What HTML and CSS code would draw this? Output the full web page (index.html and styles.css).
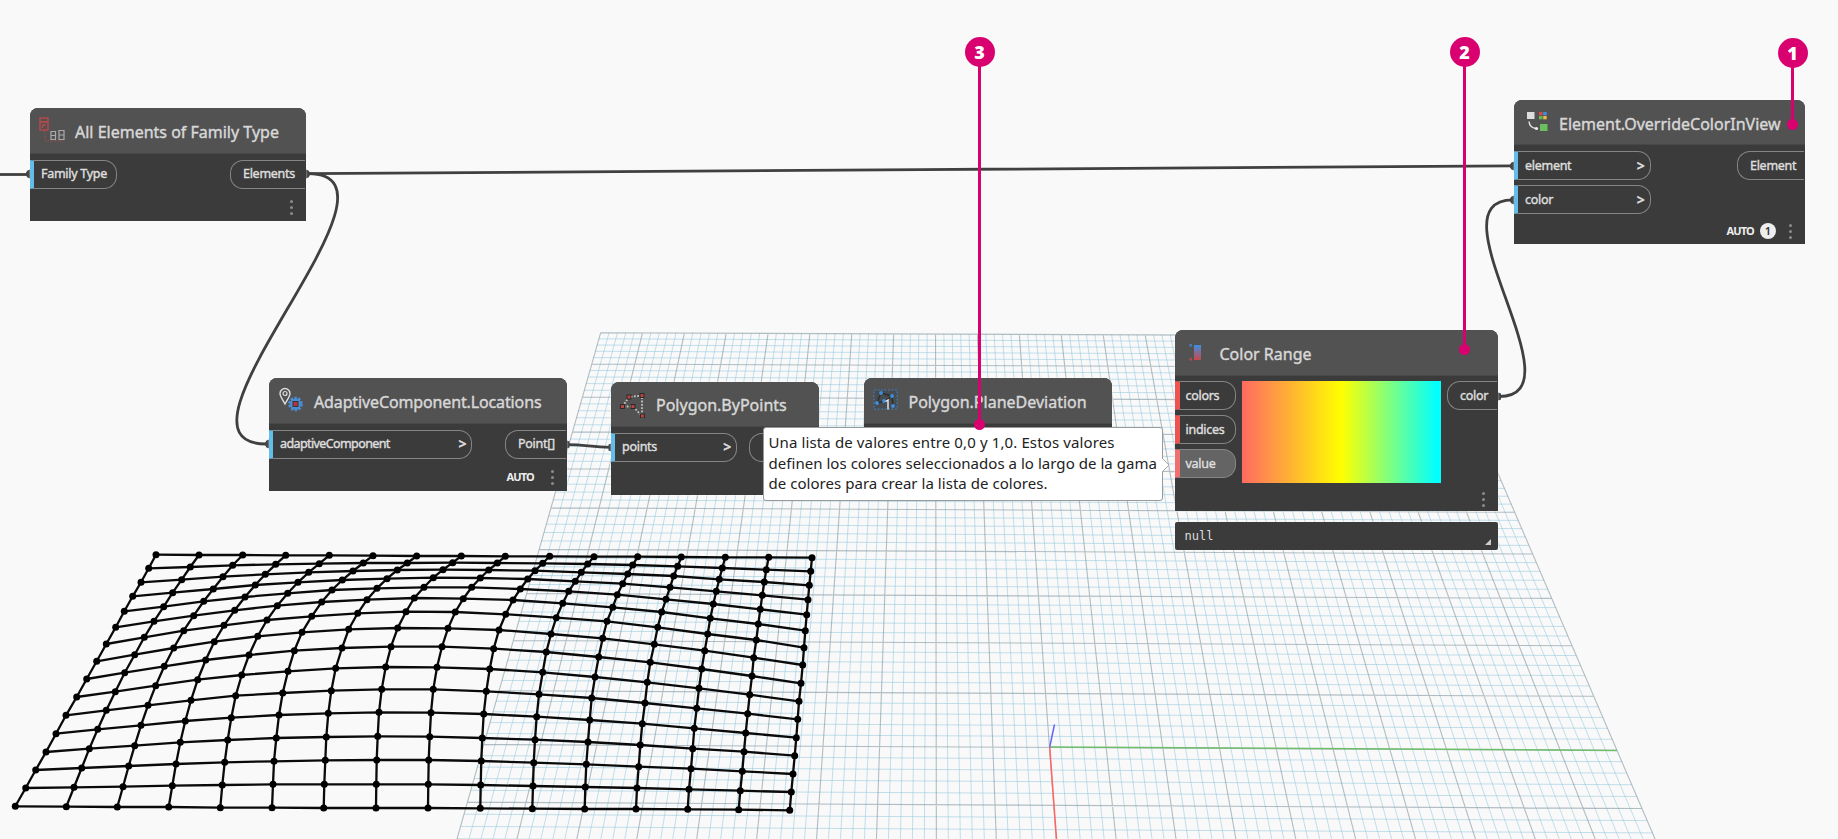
FILE: index.html
```html
<!DOCTYPE html>
<html lang="es">
<head>
<meta charset="utf-8">
<title>Dynamo</title>
<link rel="stylesheet" href="styles.css">
</head>
<body>
<main class="workspace">
  <svg class="scene" width="1838" height="839" viewBox="0 0 1838 839">
    <g id="floor"></g>
    <g class="axes">
      <path class="axis-y" d="M1049.7 747L1617 750.4"/>
      <path class="axis-x" d="M1049.7 747L1056.5 839"/>
      <path class="axis-z" d="M1049.7 747L1054.5 724.5"/>
    </g>
    <g id="mesh"></g>
    <g class="wires">
      <path d="M0 174.5H28"/>
      <path d="M308 173.7C700 173.7 1120 165.8 1513 165.8"/>
      <path d="M308 173.7C425 173.7 150 444 266 444"/>
      <path d="M568 444.6C585 444.6 592 447.3 610 447.3"/>
      <path d="M1499 396.5C1583 396.5 1428 199.8 1513 199.8"/>
    </g>
    <g class="plugs">
      <path d="M30 169.5v9l-2.500-1q-3.500-3.500 0-7z"/>
      <path d="M306 169.500v9l2.500-1q3-3.500 0-7z"/>
      <path d="M269 439.500v9l-2.500-1q-3-3.500 0-7z"/>
      <path d="M567 440.500v8l2.500-1v-6z"/>
      <path d="M611 443.500v8l-2.500-1v-6z"/>
      <path d="M1498 392.500v8l3-1v-6z"/>
      <path d="M1514 161.500v9l-2.500-1q-3.500-3.500 0-7z"/>
      <path d="M1514 195.500v9l-2.500-1q-3.500-3.500 0-7z"/>
    </g>
  </svg>

  <section class="node node-family">
    <header class="head">
      <svg class="icon" width="28" height="28" viewBox="0 0 28 28">
        <g fill="none" stroke="#c24848" stroke-width="1.300"><rect x="2" y="2" width="8" height="12"/><path d="M2 6h8M4.500 9h3M4.500 9v3"/><path d="M7 15v10h18" stroke-dasharray="1 1.500" stroke-width="1"/></g>
        <g fill="none" stroke="#aaa" stroke-width="1.200"><path d="M13 15.500h4.500v8h-4.500zM13 19.500h4.500M21 14.500h5v9h-5zM21 19h5"/></g>
      </svg>
      <h2>All Elements of Family Type</h2>
    </header>
    <div class="ports">
      <div class="col"><span class="port in">Family Type</span></div>
      <div class="col end"><span class="port out">Elements</span></div>
    </div>
    <footer class="foot"><i class="more"></i></footer>
  </section>

  <section class="node node-locations">
    <header class="head">
      <svg class="icon" width="28" height="28" viewBox="0 0 28 28">
        <path d="M8 18C5 12.500 3 10 3 7.500a5 5 0 0 1 10 0c0 2.500-2 5-5 10.500z" fill="none" stroke="#ddd" stroke-width="1.400"/><circle cx="8" cy="7.500" r="2" fill="none" stroke="#ddd" stroke-width="1.200"/>
        <circle cx="18.500" cy="18" r="5.500" fill="#4a8fd6"/><circle cx="18.500" cy="18" r="6" fill="none" stroke="#4a8fd6" stroke-width="2.600" stroke-dasharray="2.400 1.370"/>
        <rect x="16" y="15.500" width="5" height="5" fill="#b03838" stroke="#3a3038"/>
      </svg>
      <h2 class="tight">AdaptiveComponent.Locations</h2>
    </header>
    <div class="ports">
      <div class="col"><span class="port in narrow">adaptiveComponent<b>&gt;</b></span></div>
      <div class="col end"><span class="port out">Point[]</span></div>
    </div>
    <footer class="foot"><span class="auto">AUTO</span><i class="more"></i></footer>
  </section>

  <section class="node node-bypoints">
    <header class="head">
      <svg class="icon" width="28" height="28" viewBox="0 0 28 28">
        <path d="M3.500 16.500L10 7L23 5.500V26L14 16.500H3.500" fill="none" stroke="#c4c4c4" stroke-width="1.800" stroke-dasharray="1.800 1.500"/>
        <g fill="#b8433f" stroke="#2b2b2b"><rect x="8" y="5" width="4" height="4"/><rect x="21" y="3.500" width="4" height="4"/><rect x="1.500" y="14.500" width="4" height="4"/><rect x="12" y="14.500" width="4" height="4"/><rect x="21.500" y="24" width="4" height="4"/></g>
      </svg>
      <h2>Polygon.ByPoints</h2>
    </header>
    <div class="ports">
      <div class="col"><span class="port in">points<b>&gt;</b></span></div>
      <div class="col end"><span class="port out"></span></div>
    </div>
    <footer class="foot"></footer>
  </section>

  <section class="node node-deviation">
    <header class="head">
      <svg class="icon" width="28" height="28" viewBox="0 0 28 28">
        <rect x="2" y="4" width="23" height="19" fill="#474c50" stroke="#3f7fbd" stroke-dasharray="2 1.500"/>
        <path d="M5 17L9 7L20 10L21 21M5 17L13 15L20 10" fill="none" stroke="#2c2c2c" stroke-width="1.300"/>
        <g fill="#3f8ee0"><circle cx="9" cy="7" r="1.900"/><circle cx="20" cy="10" r="1.900"/><circle cx="5" cy="17" r="1.900"/><circle cx="12" cy="15" r="1.900"/><circle cx="21" cy="20" r="1.900"/></g>
        <path d="M13.500 15.500L16 14v9.500" fill="none" stroke="#eee" stroke-width="1.400"/>
      </svg>
      <h2>Polygon.PlaneDeviation</h2>
    </header>
  </section>

  <section class="node node-range">
    <header class="head">
      <svg class="icon" width="28" height="28" viewBox="0 0 28 28">
        <defs><linearGradient id="rb" x2="0" y2="1"><stop offset="0" stop-color="#3f8ee0"/><stop offset="1" stop-color="#c8484c"/></linearGradient></defs>
        <rect x="11" y="6" width="7" height="15" fill="url(#rb)"/><rect x="6.500" y="5" width="2.500" height="2.500" fill="#3f7fc0"/><rect x="6.500" y="19" width="2.500" height="2.500" fill="#b8484c"/>
      </svg>
      <h2>Color Range</h2>
    </header>
    <div class="ports">
      <div class="col"><span class="port in bad">colors</span><span class="port in bad">indices</span><span class="port in bad hover">value</span></div>
      <div class="spectrum"></div>
      <div class="col end"><span class="port out">color</span></div>
    </div>
    <footer class="foot"><i class="more"></i></footer>
  </section>
  <div class="preview">null<i class="grip"></i></div>

  <section class="node node-override">
    <header class="head">
      <svg class="icon" width="28" height="28" viewBox="0 0 28 28">
        <rect x="5" y="4" width="7.500" height="7" fill="#ddd"/>
        <rect x="17" y="4" width="3.500" height="3.300" fill="#d94a45"/><rect x="21.200" y="4" width="3.500" height="3.300" fill="#3f8ee0"/><rect x="17" y="8" width="3.500" height="3.300" fill="#5fb85a"/><rect x="21.200" y="8" width="3.500" height="3.300" fill="#f0b93a"/>
        <path d="M7 13.500c.5 4.500 3 6.500 7 7" fill="none" stroke="#e8e8e8" stroke-width="1.400"/><circle cx="14.500" cy="20.500" r="1.600" fill="#eee"/>
        <rect x="18" y="16" width="7.500" height="7" fill="#6abf5e"/>
      </svg>
      <h2>Element.OverrideColorInView</h2>
    </header>
    <div class="ports">
      <div class="col"><span class="port in">element<b>&gt;</b></span><span class="port in">color<b>&gt;</b></span></div>
      <div class="col end"><span class="port out">Element</span></div>
    </div>
    <footer class="foot"><span class="auto">AUTO</span><span class="count">1</span><i class="more"></i></footer>
  </section>

  <aside class="tooltip">
    <p class="l1">Una lista de valores entre 0,0 y 1,0. Estos valores</p>
    <p class="l2">definen los colores seleccionados a lo largo de la gama</p>
    <p class="l3">de colores para crear la lista de colores.</p>
    <svg class="tip" width="9" height="16" viewBox="0 0 9 16"><path d="M0 1L7 8L0 15" fill="#fff" stroke="#aaa"/></svg>
  </aside>

  <div class="pin pin3">3</div>
  <div class="pin pin2">2</div>
  <div class="pin pin1">1</div>
</main>
<script src="scene.js"></script>
</body>
</html>
```
FILE: styles.css
```css
* { box-sizing: border-box; }
body { margin: 0; background: #f9f9f9; font-family: "Noto Sans", "Open Sans", sans-serif; }
.workspace { position: relative; width: 1838px; height: 839px; overflow: hidden; background: #f9f9f9; }
.scene { position: absolute; left: 0; top: 0; }

.minor { fill: none; stroke: #93c6de; stroke-opacity: .55; stroke-width: 1; }
.major { fill: none; stroke: #748c98; stroke-opacity: .55; stroke-width: 1.1; }
.axes path { fill: none; stroke-width: 1.5; }
.axes .axis-y { stroke: #6fbd6c; }
.axes .axis-x { stroke: #ff6464; }
.axes .axis-z { stroke: #6464ff; }
.mesh-line { fill: none; stroke: #0a0a0a; stroke-width: 2.3; }
.mesh-dot { fill: #000; }
.wires path { fill: none; stroke: #404040; stroke-width: 2.8; }
.plugs path { fill: #444; }

.node { position: absolute; display: flex; flex-direction: column; background: #3b3b3b; border-radius: 8px 8px 0 0; overflow: hidden; box-shadow: 0 0 2px rgba(255, 255, 255, .9); color: #dcdcdc; }
.head { display: flex; align-items: center; height: 46px; background: #525252; border-bottom: 1px solid #484848; }
.head h2 { margin: 0; padding-top: 3px; font-size: 16px; line-height: 22px; font-weight: 400; -webkit-text-stroke: .4px; color: #d8d8d8; white-space: nowrap; }
.head .tight { letter-spacing: -.13px; }
.icon { flex: none; margin-left: 8px; margin-right: 9px; }
.ports { display: flex; justify-content: space-between; padding-top: 6px; }
.col { display: flex; flex-direction: column; gap: 5px; }
.end { align-items: flex-end; }
.port { display: flex; align-items: center; justify-content: space-between; height: 29px; border: 1px solid #858585; font-size: 12.5px; letter-spacing: -.28px; -webkit-text-stroke: .4px; white-space: nowrap; color: #dedede; }
.port b { font-size: 14px; font-weight: 600; }
.in { border-left: 4px solid #62bdea; border-radius: 0 13px 13px 0; padding: 0 5px 1px 7px; }
.out { border-right: 0; border-radius: 13px 0 0 13px; padding: 0 0 1px 12px; margin-right: 1px; }
.narrow { letter-spacing: -.6px; }
.bad { border-left: 5px solid #ef5350; padding-left: 6px; }
.hover { background: #646464; border-left-color: #f07070; }
.foot { flex: 1; display: flex; justify-content: flex-end; align-items: center; padding-top: 5px; }
.more { width: 3px; height: 3px; border-radius: 50%; background: #8a8a8a; margin-right: 13px; box-shadow: 0 -6px #8a8a8a, 0 6px #8a8a8a; }
.auto { font-size: 11px; font-weight: 700; line-height: 14px; letter-spacing: -.8px; color: #eee; }
.auto + .more { margin-left: 17px; }
.count { width: 16px; height: 16px; margin: 0 13px 0 6px; border-radius: 50%; background: #eee; color: #333; font-size: 11px; font-weight: 600; line-height: 16px; text-align: center; }

.node-family { left: 30px; top: 107.500px; width: 276px; height: 113.500px; }
.node-family .in { width: 87px; }
.node-family .out { width: 75px; }
.node-locations { left: 269px; top: 377.500px; width: 298px; height: 113.500px; }
.node-locations .in { width: 203px; }
.node-locations .out { width: 61px; }
.node-bypoints { left: 611px; top: 381.500px; width: 207.500px; height: 113px; }
.node-bypoints .head { height: 45px; }
.node-bypoints .in { width: 126px; }
.node-bypoints .out { width: 69px; }
.node-deviation { left: 863.500px; top: 377.500px; width: 248px; height: 100px; }
.node-range { left: 1174.500px; top: 330px; width: 323.500px; height: 181px; }
.node-range .icon { margin-right: 9px; }
.node-range .ports { padding-top: 5px; }
.node-range .in { width: 61px; }
.node-range .out { width: 50px; }
.spectrum { width: 199px; height: 101.500px; background: linear-gradient(90deg, #ff6a62, #ffff00 50%, #00ffff 98%); }
.node-override { left: 1514px; top: 100px; width: 291px; height: 143.500px; }
.node-override .head { height: 45px; }
.node-override .in { width: 136.500px; }
.node-override .out { width: 67px; }

.preview { position: absolute; left: 1174.500px; top: 521.500px; width: 323.500px; height: 28.500px; padding: 1px 10px 0; display: flex; justify-content: space-between; align-items: center; border-radius: 2px; background: #3b3b3b; box-shadow: 0 0 2px #fff; color: #dedede; font: 12px/28px "DejaVu Sans Mono", monospace; }
.grip { border-left: 6px solid transparent; border-bottom: 6px solid #ccc; margin: 11px -3px 0 0; }

.tooltip { position: absolute; left: 762.500px; top: 426.500px; width: 400.500px; height: 74px; padding: 4.500px 5px; background: #fff; border: 1px solid #999; border-radius: 3px; color: #222; font-size: 15px; line-height: 20.700px; letter-spacing: .04px; white-space: nowrap; }
.tooltip p { margin: 0; }
.tooltip .l1 { letter-spacing: .12px; }
.tip { position: absolute; right: -9px; top: 29px; }

.pin { position: absolute; width: 30px; height: 30px; border-radius: 50%; background: #d9006f; color: #fff; font-size: 18px; font-weight: 900; line-height: 30px; text-align: center; }
.pin::before { content: ""; position: absolute; left: 13.500px; top: 28px; width: 3px; height: var(--len); background: #d9006f; }
.pin::after { content: ""; position: absolute; left: 9.500px; top: calc(22px + var(--len)); width: 11px; height: 11px; border-radius: 50%; background: #d9006f; }
.pin3 { left: 964.500px; top: 37px; --len: 360px; }
.pin2 { left: 1449.500px; top: 37px; --len: 285px; }
.pin1 { left: 1777.500px; top: 38px; --len: 59px; }
```
FILE: scene.js
```js
const NS = 'http://www.w3.org/2000/svg';
const add = (parent, tag, attrs) => {
  const el = document.createElementNS(NS, tag);
  for (const k in attrs) el.setAttribute(k, attrs[k]);
  parent.appendChild(el);
};

// Perspective floor: 20 major cells across, the quad spans 20 x 10 cells.
const q = [[600.7, 332.7], [1439, 336.1], [1617, 750.4], [483.8, 744.5]];
const sx = q[0][0] - q[1][0] + q[2][0] - q[3][0];
const sy = q[0][1] - q[1][1] + q[2][1] - q[3][1];
const dx1 = q[1][0] - q[2][0], dx2 = q[3][0] - q[2][0];
const dy1 = q[1][1] - q[2][1], dy2 = q[3][1] - q[2][1];
const det = dx1 * dy2 - dx2 * dy1;
const g = (sx * dy2 - dx2 * sy) / det;
const h = (dx1 * sy - sx * dy1) / det;
const a = q[1][0] - q[0][0] + g * q[1][0], b = q[3][0] - q[0][0] + h * q[3][0];
const d = q[1][1] - q[0][1] + g * q[1][1], e = q[3][1] - q[0][1] + h * q[3][1];
const project = (col, row) => {
  const u = col / 20, v = row / 10, w = g * u + h * v + 1;
  return ((a * u + b * v + q[0][0]) / w).toFixed(2) + ' ' + ((d * u + e * v + q[0][1]) / w).toFixed(2);
};
let minor = '', major = '';
for (let i = 0; i <= 100; i++) {
  const s = `M${project(i / 5, 0)}L${project(i / 5, 14)}`;
  if (i % 5) minor += s; else major += s;
}
for (let j = 0; j <= 70; j++) {
  const s = `M${project(0, j / 5)}L${project(20, j / 5)}`;
  if (j % 5) minor += s; else major += s;
}
const floor = document.getElementById('floor');
add(floor, 'path', { class: 'minor', d: minor });
add(floor, 'path', { class: 'major', d: major });

// Adaptive panel surface: one line of x,y pairs per column, thirds of a pixel.
const columns = `
468,44 446,85 423,127 398,169 373,214 347,262 319,312 290,364 260,417 230,471 198,526 168,581 138,636 107,690 77,744 46,799
597,45 571,81 545,119 518,158 491,200 462,244 433,292 404,344 374,398 346,455 319,511 293,568 268,626 245,684 222,742 199,800
728,45 698,76 669,110 640,147 611,184 581,227 551,272 521,324 493,379 467,437 444,496 423,556 404,617 386,678 369,740 352,801
857,46 827,73 796,103 766,135 735,171 704,211 672,256 643,305 617,360 593,419 573,481 556,543 541,607 528,672 517,737 506,801
988,46 958,71 926,97 894,127 863,160 832,197 801,240 773,289 747,345 725,405 707,467 694,533 683,600 674,667 667,735 661,803
1119,47 1090,69 1059,93 1027,120 996,150 965,186 935,229 906,277 883,332 864,394 848,459 837,525 829,594 822,664 819,733 816,803
1250,48 1222,69 1192,90 1161,116 1131,145 1101,179 1073,220 1046,268 1026,324 1007,385 994,452 985,520 979,591 976,661 973,733 971,804
1384,48 1358,68 1329,89 1300,113 1272,142 1243,174 1218,215 1193,264 1173,320 1157,381 1145,448 1137,517 1133,589 1130,660 1129,733 1128,804
1516,49 1492,69 1466,90 1441,114 1415,142 1390,176 1366,216 1344,265 1326,320 1311,382 1300,448 1293,518 1289,590 1286,660 1285,733 1284,804
1649,49 1628,70 1605,92 1583,117 1561,147 1539,180 1517,223 1497,270 1481,326 1469,387 1459,454 1451,522 1447,594 1444,663 1442,735 1441,805
1782,50 1763,72 1744,97 1726,124 1706,154 1688,190 1669,233 1653,282 1639,336 1628,397 1617,463 1610,530 1605,599 1601,668 1599,738 1597,806
1913,50 1898,75 1883,102 1868,131 1852,164 1838,202 1821,244 1808,295 1796,351 1785,411 1775,474 1769,540 1764,606 1759,673 1756,741 1754,807
2044,51 2033,79 2021,108 2010,142 1998,178 1985,216 1973,262 1963,313 1951,367 1942,427 1935,489 1927,551 1921,615 1916,680 1911,744 1908,807
2176,52 2167,84 2158,118 2149,154 2140,192 2131,235 2123,282 2114,332 2105,387 2097,445 2090,505 2083,565 2078,626 2073,686 2067,748 2063,808
2306,52 2299,89 2293,126 2287,166 2281,208 2275,252 2269,300 2261,353 2256,408 2249,464 2243,521 2237,579 2232,635 2227,694 2221,752 2216,809
2436,53 2432,94 2428,136 2424,179 2420,224 2416,272 2412,323 2408,375 2403,430 2397,484 2393,538 2389,593 2384,647 2379,702 2374,756 2369,811`
  .trim().split('\n').map(l => l.split(' ').map(p => {
    const [x, y] = p.split(',').map(Number);
    return [x / 3, 540 + y / 3];
  }));
const mesh = document.getElementById('mesh');
const line = pts => 'M' + pts.map(p => p[0].toFixed(1) + ' ' + p[1].toFixed(1)).join('L');
columns.forEach(c => add(mesh, 'path', { class: 'mesh-line', d: line(c) }));
columns[0].forEach((_, r) => add(mesh, 'path', { class: 'mesh-line', d: line(columns.map(c => c[r])) }));
columns.flat().forEach(p => add(mesh, 'circle', { class: 'mesh-dot', cx: p[0].toFixed(1), cy: p[1].toFixed(1), r: 3.5 }));
```
